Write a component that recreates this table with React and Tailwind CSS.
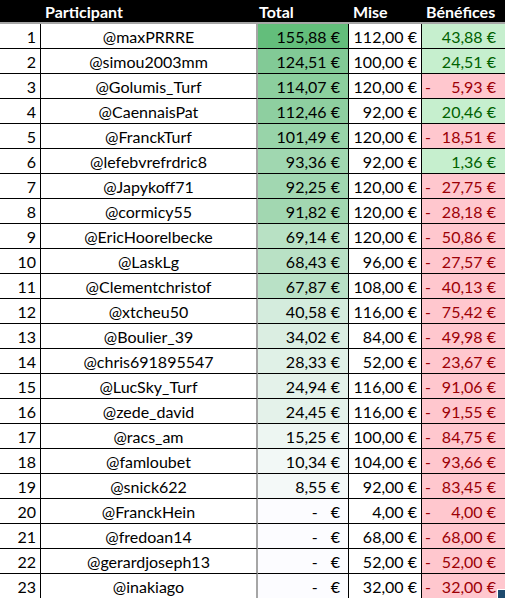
const rows = [
  ['@maxPRRRE', 155.88, 112, 43.88],
  ['@simou2003mm', 124.51, 100, 24.51],
  ['@Golumis_Turf', 114.07, 120, -5.93],
  ['@CaennaisPat', 112.46, 92, 20.46],
  ['@FranckTurf', 101.49, 120, -18.51],
  ['@lefebvrefrdric8', 93.36, 92, 1.36],
  ['@Japykoff71', 92.25, 120, -27.75],
  ['@cormicy55', 91.82, 120, -28.18],
  ['@EricHoorelbecke', 69.14, 120, -50.86],
  ['@LaskLg', 68.43, 96, -27.57],
  ['@Clementchristof', 67.87, 108, -40.13],
  ['@xtcheu50', 40.58, 116, -75.42],
  ['@Boulier_39', 34.02, 84, -49.98],
  ['@chris691895547', 28.33, 52, -23.67],
  ['@LucSky_Turf', 24.94, 116, -91.06],
  ['@zede_david', 24.45, 116, -91.55],
  ['@racs_am', 15.25, 100, -84.75],
  ['@famloubet', 10.34, 104, -93.66],
  ['@snick622', 8.55, 92, -83.45],
  ['@FranckHein', 0, 4, -4],
  ['@fredoan14', 0, 68, -68],
  ['@gerardjoseph13', 0, 52, -52],
  ['@inakiago', 0, 32, -32],
]

const fmt = (n) => Math.abs(n).toFixed(2).replace('.', ',') + ' €'

// excel 2-colour scale, white -> green
const max = 155.88
function scale(v) {
  const t = v / max
  const lo = [252, 252, 255]
  const hi = [99, 190, 123]
  const c = lo.map((l, i) => Math.round(l + (hi[i] - l) * t))
  return `rgb(${c[0]},${c[1]},${c[2]})`
}

const cell = 'h-[25px] border-b border-black leading-[26px] whitespace-nowrap'

export default function App() {
  return (
    <div className="relative w-[505px] h-[598px] overflow-hidden bg-white text-black text-[16px]" style={{ fontFamily: 'Lato, "Liberation Sans", sans-serif' }}>
      <div className="grid grid-cols-[41px_217px_91px_73px_83px]">
        <div className="h-6 bg-black border-b-2 border-[#a6a6a6]" />
        <div className="h-6 bg-black border-b-2 border-[#a6a6a6] pl-1 font-bold text-white leading-[24px]">Participant</div>
        <div className="h-6 bg-black border-b-2 border-[#a6a6a6] pl-px font-bold text-white leading-[24px]">Total</div>
        <div className="h-6 bg-black border-b-2 border-[#a6a6a6] pl-1 font-bold text-white leading-[24px]">Mise</div>
        <div className="h-6 bg-black border-b-2 border-[#a6a6a6] pl-1 font-bold text-white leading-[24px]">Bénéfices</div>

        {rows.map(([name, total, mise, benef], i) => (
          <div key={name} className="contents">
            <div className={`${cell} border-r text-right pr-1`}>{i + 1}</div>
            <div className={`${cell} border-r-2 border-r-[#a6a6a6] text-center`}>{name}</div>
            <div className={`${cell} border-r pr-2 flex justify-end`} style={{ backgroundColor: scale(total) }}>
              {total === 0 ? (
                <span className="flex gap-[13px]"><span>-</span><span>€</span></span>
              ) : fmt(total)}
            </div>
            <div className={`${cell} border-r text-right pr-1`}>{fmt(mise)}</div>
            {benef >= 0 ? (
              <div className={`${cell} bg-[#c6efce] text-[#006100] text-right pr-[9px]`}>{fmt(benef)}</div>
            ) : (
              <div className={`${cell} bg-[#ffc7ce] text-[#9c0006] flex justify-between pl-[3px] pr-[9px]`}>
                <span>-</span>
                <span>{fmt(benef)}</span>
              </div>
            )}
          </div>
        ))}
      </div>
      <div className="absolute right-0 bottom-0 w-[8px] h-[9px] bg-[#1d4a6e] border-l border-t border-white" />
    </div>
  )
}
